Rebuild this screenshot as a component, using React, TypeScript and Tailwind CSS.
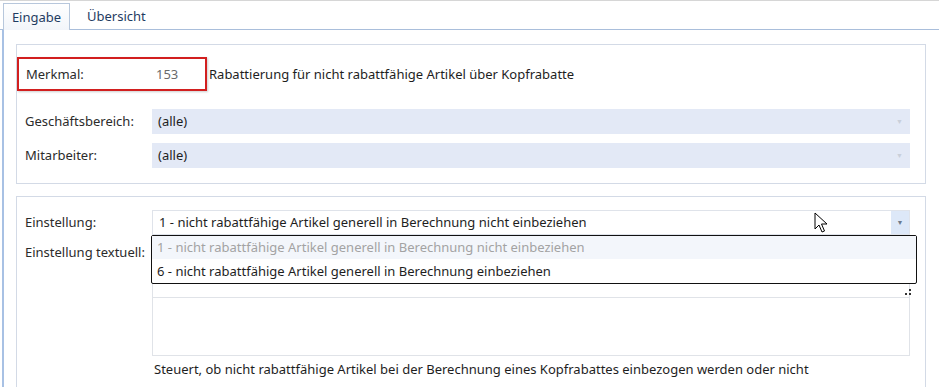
import React from "react";

const font = { fontFamily: "'Noto Sans', 'Liberation Sans', sans-serif" };

function Combo({ value, light = true }: { value: string; light?: boolean }) {
  return (
    <div
      className={
        "flex h-[25px] flex-1 items-center justify-between pl-[6px] " +
        (light ? "bg-[#e3e9f6]" : "border border-[#dfe3ea] bg-white")
      }
    >
      <span className="text-[#1e1e1e]">{value}</span>
      {light ? (
        <span className="mr-[7px] text-[7px] leading-none text-[#c9cfda]">▼</span>
      ) : (
        <span className="flex h-full w-[18px] items-center justify-center bg-[#dde8f8] text-[7px] text-[#6d7a8c]">
          ▼
        </span>
      )}
    </div>
  );
}

function Row({ label, children }: { label: string; children: React.ReactNode }) {
  return (
    <div className="flex items-center">
      <div className="w-[135px] shrink-0 pl-[8px] text-[#2b2b2b]">{label}</div>
      {children}
    </div>
  );
}

export default function App() {
  return (
    <div
      className="relative h-[387px] w-[939px] overflow-hidden bg-white text-[13px] leading-none"
      style={font}
    >
      <div className="h-[2px] border-t border-[#d6d6d6]" />

      {/* tabs */}
      <div className="flex h-[28px] items-end border-b border-[#a9bedb] pl-[3px]">
        <div className="-mb-px flex h-[27px] w-[67px] items-center justify-center border border-b-0 border-[#b7c7dc] bg-gradient-to-b from-white to-[#f2f5fa] text-[#1f3c62]">
          Eingabe
        </div>
        <div className="flex h-[26px] items-center pl-[17px] text-[#1f3c62]">Übersicht</div>
      </div>

      {/* panel */}
      <div className="ml-[2px] h-full border-l-2 border-[#a8c1e4] pl-[12px] pr-[12px] pt-[14px]">
        <div className="w-[910px] border border-[#d3dae6] pb-[15px] pt-[12px]">
          <div className="flex items-center">
            <div className="flex h-[34px] w-[190px] items-center border-2 border-[#d21f1f] pl-[7px] shadow-[1px_1px_2px_rgba(0,0,0,0.2)]">
              <span className="w-[130px] text-[#2b2b2b]">Merkmal:</span>
              <span className="text-[#6a6a6a]">153</span>
            </div>
            <span className="ml-[2px] text-[#1e1e1e]">
              Rabattierung für nicht rabattfähige Artikel über Kopfrabatte
            </span>
          </div>
          <div className="mt-[18px] flex flex-col gap-[9px] pr-[15px]">
            <Row label="Geschäftsbereich:">
              <Combo value="(alle)" />
            </Row>
            <Row label="Mitarbeiter:">
              <Combo value="(alle)" />
            </Row>
          </div>
        </div>

        <div className="mt-[12px] h-[300px] w-[910px] border border-[#d3dae6] pt-[13px]">
          <div className="relative pr-[15px]">
            <Row label="Einstellung:">
              <Combo value="1 - nicht rabattfähige Artikel generell in Berechnung nicht einbeziehen" light={false} />
            </Row>
            <div className="mt-[7px] flex">
              <div className="w-[135px] shrink-0 pl-[8px] pt-[4px] text-[#2b2b2b]">Einstellung textuell:</div>
              <div className="flex-1 border border-[#e0e3e8]">
                <div className="relative h-[55px] border-b border-[#e0e3e8]">
                  <svg className="absolute bottom-[1px] right-[-3px]" width="8" height="8" viewBox="0 0 8 8">
                    <rect x="5" y="1" width="2" height="2" fill="#333" />
                    <rect x="5" y="5" width="2" height="2" fill="#333" />
                    <rect x="1" y="5" width="2" height="2" fill="#333" />
                  </svg>
                </div>
                <div className="h-[57px]" />
              </div>
            </div>
            <div className="mt-[7px] pl-[137px] text-[#1e1e1e]">
              Steuert, ob nicht rabattfähige Artikel bei der Berechnung eines Kopfrabattes einbezogen werden oder nicht
            </div>

            {/* open dropdown list */}
            <div className="absolute left-[134px] top-[25px] w-[766px] rounded-[2px] border-[1.5px] border-[#111] bg-white">
              <div className="flex h-[23px] items-center bg-[#f3f6fb] pl-[5px] text-[#a3a3a3]">
                1 - nicht rabattfähige Artikel generell in Berechnung nicht einbeziehen
              </div>
              <div className="flex h-[24px] items-center pl-[5px] text-[#1e1e1e]">
                6 - nicht rabattfähige Artikel generell in Berechnung einbeziehen
              </div>
            </div>
          </div>
        </div>
      </div>

      {/* mouse cursor */}
      <svg className="absolute left-[814px] top-[212px]" width="14" height="22" viewBox="0 0 14 22">
        <path
          d="M1 1 L1 17 L5 13 L8 20 L10.5 19 L7.5 12 L13 12 Z"
          fill="white"
          stroke="black"
          strokeWidth="1"
          strokeLinejoin="round"
        />
      </svg>
    </div>
  );
}
